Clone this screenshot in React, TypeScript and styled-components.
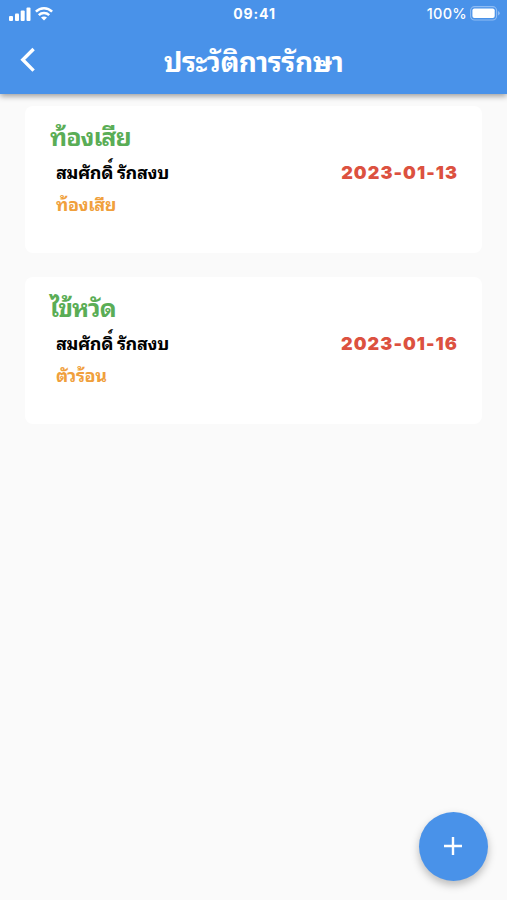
import React from "react";
import styled, { createGlobalStyle } from "styled-components";

const Global = createGlobalStyle`
  * { box-sizing: border-box; }
  body { margin: 0; background: #fafafa; }
`;

const Screen = styled.div`
  display: flex;
  flex-direction: column;
  width: 507px;
  height: 900px;
  overflow: hidden;
  background: #fafafa;
  font-family: Inter, Thonburi, "Noto Sans Thai Looped", Loma, Garuda, Waree, "Noto Sans Thai", sans-serif;
`;

const Header = styled.header`
  flex: none;
  height: 94px;
  background: #4992e9;
  color: #fff;
  box-shadow: 0 2px 6px rgba(0, 0, 0, 0.4);
`;

const StatusBar = styled.div`
  display: grid;
  grid-template-columns: 1fr auto 1fr;
  align-items: center;
  height: 27px;
  padding: 0 7px 0 9px;
`;

const StatusIcons = styled.div`
  display: flex;
  align-items: center;
  gap: 4px;
`;

const Clock = styled.div`
  font-size: 14px;
  font-weight: 700;
  letter-spacing: 0.9px;
`;

const Battery = styled.div`
  display: flex;
  align-items: center;
  justify-content: flex-end;
  gap: 3px;
  font-size: 14.5px;
  font-weight: 500;
  letter-spacing: 0.3px;
`;

const NavBar = styled.nav`
  display: grid;
  grid-template-columns: 54px 1fr 54px;
  align-items: center;
  height: 66px;
`;

const BackButton = styled.button`
  display: flex;
  width: 54px;
  padding: 0 0 0 18px;
  border: 0;
  background: none;
  color: inherit;
`;

const Title = styled.h1`
  margin: 0;
  padding-top: 3px;
  text-align: center;
  font-size: 28px;
  line-height: 40px;
  font-weight: 700;
  letter-spacing: -0.5px;
  white-space: nowrap;
`;

const List = styled.main`
  display: flex;
  flex-direction: column;
  gap: 24px;
  padding: 106px 25px 0;
  margin-top: -94px;
`;

const Card = styled.article`
  height: 147px;
  padding: 14px 24px 0 25px;
  border-radius: 8px;
  background: #fff;
`;

const Illness = styled.h2`
  margin: 0;
  height: 36px;
  line-height: 34px;
  font-size: 25px;
  font-weight: 700;
  letter-spacing: -1px;
  color: #5aad56;
`;

const Row = styled.div`
  display: flex;
  justify-content: space-between;
  align-items: center;
  height: 32px;
  padding-left: 6px;
`;

const Patient = styled.span`
  padding-top: 2px;
  line-height: 26px;
  font-size: 18px;
  font-weight: 700;
  letter-spacing: -0.35px;
  color: #000;
`;

const VisitDate = styled.time`
  font-size: 18px;
  font-weight: 900;
  letter-spacing: 1.05px;
  color: #dc5140;
`;

const Symptom = styled(Patient)`
  letter-spacing: -0.4px;
  color: #f0a03c;
`;

const AddButton = styled.button`
  position: fixed;
  left: 418.5px;
  top: 811.5px;
  display: flex;
  align-items: center;
  justify-content: center;
  width: 69px;
  height: 69px;
  padding: 0;
  border: 0;
  border-radius: 50%;
  background: #4992e9;
  color: #fff;
  box-shadow: 0 4px 8px rgba(0, 0, 0, 0.26);
`;

const records = [
  { illness: "ท้องเสีย", patient: "สมศักดิ์ รักสงบ", symptom: "ท้องเสีย", date: "2023-01-13" },
  { illness: "ไข้หวัด", patient: "สมศักดิ์ รักสงบ", symptom: "ตัวร้อน", date: "2023-01-16" },
];

const SignalIcon = () => (
  <svg width="22" height="14" viewBox="0 0 22 14" fill="currentColor">
    <rect x="0" y="9" width="4" height="5" rx="1" />
    <rect x="6" y="6.5" width="4" height="7.5" rx="1" />
    <rect x="11.7" y="3.5" width="4" height="10.5" rx="1" />
    <rect x="17.5" y="0.5" width="4" height="13.5" rx="1" />
  </svg>
);

const WifiIcon = () => (
  <svg width="18" height="14" viewBox="0 0 18 14" fill="none" stroke="currentColor" strokeWidth="2.5">
    <path d="M0.9 4.7C5.4 0.1 12.6 0.1 17.1 4.7" />
    <path d="M3.8 8.1C6.7 5.3 11.3 5.3 14.2 8.1" />
    <path d="M9 13.5L6 10.5C7.6 9 10.4 9 12 10.5Z" fill="currentColor" stroke="none" />
  </svg>
);

const BatteryIcon = () => (
  <svg width="30" height="15" viewBox="0 0 30 15">
    <rect x="0.6" y="0.6" width="26" height="13.4" rx="4" fill="none" stroke="#8fbcf3" strokeWidth="1.1" />
    <rect x="2.4" y="2.5" width="22.3" height="9.5" rx="2" fill="#fff" />
    <path d="M28 5V9.5Q29.8 8.5 29.8 7.2Q29.8 6 28 5Z" fill="#8fbcf3" />
  </svg>
);

export default function App() {
  return (
    <Screen>
      <Global />
      <Header>
        <StatusBar>
          <StatusIcons>
            <SignalIcon />
            <WifiIcon />
          </StatusIcons>
          <Clock>09:41</Clock>
          <Battery>
            100%
            <BatteryIcon />
          </Battery>
        </StatusBar>
        <NavBar>
          <BackButton aria-label="ย้อนกลับ">
            <svg width="18" height="26" viewBox="0 0 18 26" fill="none" stroke="currentColor" strokeWidth="3.4">
              <path d="M15.6 2L4.8 12.8L15.6 23.6" />
            </svg>
          </BackButton>
          <Title>ประวัติการรักษา</Title>
        </NavBar>
      </Header>
      <List>
        {records.map((record) => (
          <Card key={record.date}>
            <Illness>{record.illness}</Illness>
            <Row>
              <Patient>{record.patient}</Patient>
              <VisitDate>{record.date}</VisitDate>
            </Row>
            <Row>
              <Symptom>{record.symptom}</Symptom>
            </Row>
          </Card>
        ))}
      </List>
      <AddButton aria-label="เพิ่ม">
        <svg width="18" height="18" viewBox="0 0 18 18" fill="none" stroke="currentColor" strokeWidth="2.4">
          <path d="M9 0V18M0 9H18" />
        </svg>
      </AddButton>
    </Screen>
  );
}
